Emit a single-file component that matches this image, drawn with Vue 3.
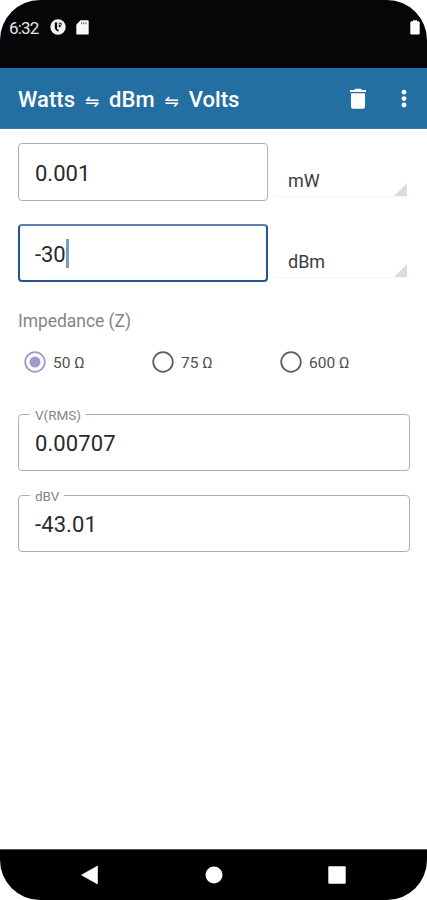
<script setup>
import { ref } from 'vue'

const inputs = ref([
  { value: '0.001', unit: 'mW', focused: false },
  { value: '-30', unit: 'dBm', focused: true },
])
const impedances = ['50 Ω', '75 Ω', '600 Ω']
const selected = ref('50 Ω')
const results = [
  { label: 'V(RMS)', value: '0.00707' },
  { label: 'dBV', value: '-43.01' },
]
</script>

<template>
  <div class="phone">
    <div class="status">
      <span class="time">6:32</span>
      <svg class="app-icon" width="16" height="16" viewBox="0 0 16 16">
        <circle cx="8" cy="8" r="7.7" fill="#f4f4f4" />
        <path d="M4.8 3.6H7.4V10.6H8.6V12.6C6.2 12 4.8 10.6 4.8 8.6Z" fill="#08080a" />
        <path d="M8.6 3.8H11.6V6.6H10.6V8.2H8.6Z" fill="#08080a" />
        <path d="M7.4 3.4H8.6V10H7.4Z" fill="#f4f4f4" />
        <circle cx="10.1" cy="5.4" r="0.8" fill="#f4f4f4" />
      </svg>
      <svg class="sd-icon" width="13" height="15" viewBox="0 0 13 15">
        <path d="M4.6 0.3H11.5Q12.7 0.3 12.7 1.5V13.4Q12.7 14.6 11.5 14.6H1.5Q0.3 14.6 0.3 13.4V4.7Z" fill="#f8f8f8" />
        <path d="M5 2.2H6.2V4.2H5ZM7.2 2.2H8.4V4.2H7.2ZM9.4 2.2H10.6V4.2H9.4Z" fill="#77777a" />
      </svg>
      <svg class="battery" width="10" height="15" viewBox="0 0 10 15">
        <path d="M3 0.3H7V1.3H8.6Q9.7 1.5 9.7 2.8V13.6Q9.7 14.6 8.6 14.6H1.4Q0.3 14.6 0.3 13.6V2.8Q0.3 1.5 1.4 1.3H3Z" fill="#fff" />
      </svg>
    </div>

    <header class="bar">
      <h1 class="title"><span>Watts</span><span class="swap">⇋</span><span>dBm</span><span class="swap">⇋</span><span>Volts</span></h1>
      <svg class="trash" width="18" height="22" viewBox="0 0 18 22">
        <path d="M1 1.9H5.2L6.2 0.7H11.8L12.8 1.9H17V4H1ZM2 5.2H16V18.7Q16 20.8 13.9 20.8H4.1Q2 20.8 2 18.7Z" fill="#fff" />
      </svg>
      <svg class="more" width="6" height="20" viewBox="0 0 6 20">
        <circle cx="3" cy="3.2" r="2.4" fill="#fff" />
        <circle cx="3" cy="9.6" r="2.4" fill="#fff" />
        <circle cx="3" cy="16" r="2.4" fill="#fff" />
      </svg>
    </header>

    <main class="content">
      <div v-for="item in inputs" :key="item.unit" class="row">
        <div class="field" :class="{ focused: item.focused }">
          <span>{{ item.value }}</span><i v-if="item.focused" class="caret"></i>
        </div>
        <div class="spinner">
          <span class="unit">{{ item.unit }}</span>
          <svg width="13" height="13" viewBox="0 0 13 13"><path d="M13 0V13H0Z" fill="#dcdcdc" /></svg>
        </div>
      </div>

      <div class="group-label">Impedance (Z)</div>
      <div class="radios">
        <div v-for="z in impedances" :key="z" class="radio" :class="{ on: z === selected }" @click="selected = z">
          <svg width="22" height="22" viewBox="0 0 22 22">
            <circle class="ring" cx="11" cy="11" r="9.8" />
            <circle v-if="z === selected" class="dot" cx="11" cy="11" r="5.5" />
          </svg>
          <span class="ohms">{{ z }}</span>
        </div>
      </div>

      <div v-for="r in results" :key="r.label" class="field result">
        <span class="legend">{{ r.label }}</span>
        <span>{{ r.value }}</span>
      </div>
    </main>

    <nav class="nav">
      <svg width="18" height="20" viewBox="0 0 18 20"><path d="M16.5 1V19L0.5 10Z" fill="#fff" stroke="#fff" stroke-width="0.6" stroke-linejoin="round" /></svg>
      <svg width="18" height="18" viewBox="0 0 18 18"><circle cx="9" cy="9" r="8.5" fill="#fff" /></svg>
      <svg width="18" height="18" viewBox="0 0 18 18"><rect x="0.3" y="0.3" width="17.4" height="17.4" rx="1" fill="#fff" /></svg>
    </nav>
  </div>
</template>

<style>
body {
  background: #fff;
}
</style>

<style scoped>
.phone {
  width: 427px;
  height: 900px;
  display: flex;
  flex-direction: column;
  box-sizing: border-box;
  background: #fff;
  border-radius: 40px;
  overflow: hidden;
  font-family: Roboto, "Liberation Sans", sans-serif;
  color: #2a2a2a;
}
.status {
  height: 68px;
  flex: none;
  box-sizing: border-box;
  padding: 19px 7px 0 9px;
  display: flex;
  align-items: flex-start;
  background: #060608;
}
.time {
  width: 41px;
  font-size: 17px;
  line-height: 18px;
  letter-spacing: -0.8px;
  color: #e8e8e8;
}
.app-icon {
  margin-right: 10px;
}
.sd-icon,
.battery {
  margin-top: 0.5px;
}
.battery {
  margin-left: auto;
}
.bar {
  height: 61px;
  flex: none;
  box-sizing: border-box;
  border-bottom: 1px solid #3d7dab;
  background: #246fa2;
  display: flex;
  align-items: center;
  padding: 2px 20px 0 18px;
}
.title {
  margin: 0;
  padding-top: 2px;
  display: flex;
  align-items: center;
  flex: 1;
  font-size: 22px;
  font-weight: 500;
  line-height: 28px;
  letter-spacing: 0.05px;
  color: #fff;
}
.swap {
  width: 34px;
  padding-top: 1px;
  box-sizing: border-box;
  text-align: center;
  font-family: "DejaVu Sans", sans-serif;
  font-size: 17px;
  font-weight: 400;
}
.trash {
  margin-right: 34px;
}
.content {
  flex: 1;
  padding: 14px 17px 0 18px;
}
.row {
  display: flex;
  height: 58px;
  margin-bottom: 23px;
}
.field {
  width: 250px;
  height: 58px;
  box-sizing: border-box;
  border: 1.5px solid #b0b0b0;
  border-radius: 4px;
  padding: 4px 0 0 16px;
  display: flex;
  align-items: center;
  font-size: 22px;
  line-height: 28px;
}
.field.focused {
  border: 2px solid #245494;
  border-top-color: #5d7fae;
  padding-left: 15px;
  letter-spacing: -0.1px;
}
.caret {
  width: 3px;
  height: 29px;
  margin-top: -4px;
  background: #7c9bc4;
}
.spinner {
  margin: 0 0 4px 5px;
  flex: 1;
  display: flex;
  align-items: flex-end;
  justify-content: space-between;
  padding: 0 3px 0 15px;
  border-bottom: 1px solid #f5f5f5;
}
.unit {
  font-size: 18px;
  line-height: 22px;
  margin-bottom: 4px;
  color: #3c3c3c;
}
.group-label {
  font-size: 17.5px;
  line-height: 22px;
  padding-top: 5px;
  letter-spacing: -0.05px;
  color: #858585;
}
.radios {
  display: flex;
  margin: 19px 0 41px 6px;
}
.radio {
  width: 128px;
  height: 22px;
  display: flex;
  align-items: center;
  gap: 7px;
  font-size: 15.5px;
  line-height: 20px;
  color: #505050;
}
.ohms {
  padding-top: 2px;
}
.ring {
  fill: none;
  stroke: #606060;
  stroke-width: 1.8;
}
.on .ring {
  stroke: #a598cd;
}
.dot {
  fill: #a598cd;
}
.field.result {
  position: relative;
  width: 392px;
  height: 57px;
  padding-top: 3px;
  margin-bottom: 24px;
}
.field.result > span:last-child {
  letter-spacing: 0.1px;
}
.legend {
  position: absolute;
  left: 11px;
  top: -7px;
  padding: 0 5px;
  background: #fff;
  font-size: 13.5px;
  line-height: 14px;
  color: #858585;
}
.nav {
  height: 51px;
  flex: none;
  box-sizing: border-box;
  border-top: 1px solid #555;
  background: #000;
  display: flex;
  align-items: center;
  justify-content: space-between;
  padding: 0 81px;
}
</style>
